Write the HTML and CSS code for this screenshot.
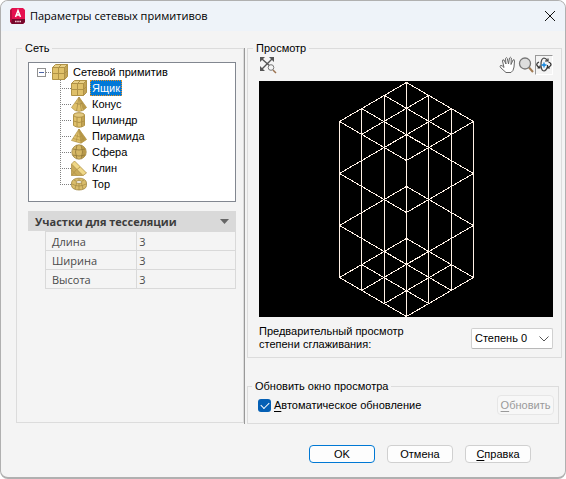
FILE: index.html
```html
<!DOCTYPE html>
<html lang="ru">
<head>
<meta charset="utf-8">
<meta name="viewport" content="width=device-width, initial-scale=1">
<title>Параметры сетевых примитивов</title>
<link rel="stylesheet" href="styles.css">
</head>
<body>
<div class="dialog" role="dialog" aria-labelledby="dialog-title">
  <header class="titlebar">
    <svg class="app-icon" viewBox="0 0 16 16" aria-hidden="true">
      <path fill="#e51050" d="M2 0h11l2 2v12l-2 2H2z"/>
      <path fill="#b80d40" d="M0 2l2-2v16l-2-2z"/>
      <path fill="#76082c" d="M2 11h13v3l-2 2H2l-1-1z"/>
      <path fill="none" stroke="#fff" stroke-width="1.5" d="M5.5 9L8 2.5 10.500 9M6.500 7h3"/>
      <path stroke="#f2c7d3" stroke-width="1.500" stroke-dasharray="1.600 .6" d="M5 13.500h6.500"/>
    </svg>
    <h1 id="dialog-title">Параметры сетевых примитивов</h1>
    <button class="close" type="button" aria-label="Закрыть">
      <svg viewBox="0 0 10 10" aria-hidden="true"><path d="M0 0l10 10M10 0L0 10"/></svg>
    </button>
  </header>

  <main class="content">
    <fieldset class="group mesh">
      <legend>Сеть</legend>
      <ul class="tree" role="tree">
        <li role="treeitem" aria-expanded="true">
          <div class="node root">
            <button class="expander" type="button" aria-label="Свернуть"></button>
            <svg class="shape" viewBox="0 0 16 16" aria-hidden="true">
              <path fill="#dfc069" stroke="#b09246" d="M.5 3.500h12v12H.5z"/>
              <path fill="#e8cf85" stroke="#b09246" d="M.5 3.500l3-3h12l-3 3z"/>
              <path fill="#c2a354" stroke="#b09246" d="M12.500 3.500l3-3v12l-3 3z"/>
              <path fill="none" stroke="#b09246" d="M.5 9.500h12l3-3M6.500 15.500v-12l3-3"/>
            </svg>
            <span class="name">Сетевой примитив</span>
          </div>
          <ul role="group">
            <li class="node" role="treeitem" aria-selected="true">
              <svg class="shape" viewBox="0 0 16 16" aria-hidden="true">
                <path fill="#dfc069" stroke="#b09246" d="M.5 3.500h12v12H.5z"/>
                <path fill="#e8cf85" stroke="#b09246" d="M.5 3.500l3-3h12l-3 3z"/>
                <path fill="#c2a354" stroke="#b09246" d="M12.500 3.500l3-3v12l-3 3z"/>
                <path fill="none" stroke="#b09246" d="M.5 9.500h12l3-3M6.500 15.500v-12l3-3"/>
              </svg>
              <span class="name selected">Ящик</span>
            </li>
            <li class="node" role="treeitem">
              <svg class="shape" viewBox="0 0 16 16" aria-hidden="true">
                <path fill="#dfc069" stroke="#b09246" stroke-width=".7" d="M8 1L.5 11.500 4 14.500l4 .9 4-.9 3.500-3z"/>
                <path fill="#b99a4b" d="M8 1l7.500 10.500-3.500 3z"/>
                <path fill="none" stroke="#a08643" stroke-width=".7" d="M8 1L5.500 15M8 1l2.500 14M4.200 7q3.800 2.500 7.600 0"/>
              </svg>
              <span class="name">Конус</span>
            </li>
            <li class="node" role="treeitem">
              <svg class="shape" viewBox="0 0 16 16" aria-hidden="true">
                <path fill="#dfc069" stroke="#b09246" d="M2.500 3v10.500q5.500 3.500 11 0V3"/>
                <path fill="#c2a354" d="M10.500 4h2.500v9.500l-2.500 1z"/>
                <ellipse cx="8" cy="3" rx="5.500" ry="2.300" fill="#e2c87e" stroke="#b09246"/>
                <path fill="none" stroke="#b09246" d="M6 5v10M10.500 5v10M2.500 9q5.500 3 11 0"/>
              </svg>
              <span class="name">Цилиндр</span>
            </li>
            <li class="node" role="treeitem">
              <svg class="shape" viewBox="0 0 16 16" aria-hidden="true">
                <path fill="#dfc069" stroke="#b09246" stroke-width=".7" d="M8 1L.5 12.500l9.500 2.700 5.500-3.700z"/>
                <path fill="#b99a4b" d="M8 1l7.500 10.500L10 15.200z"/>
                <path fill="none" stroke="#b09246" stroke-width=".7" d="M8 1l2 14M8 1L5 14M8 1l5 12M4 7.500l5 1.500 3-2M2 10.500l8 2 4-3"/>
              </svg>
              <span class="name">Пирамида</span>
            </li>
            <li class="node" role="treeitem">
              <svg class="shape" viewBox="0 0 16 16" aria-hidden="true">
                <circle cx="8" cy="8" r="7.200" fill="#d5b765" stroke="#a08643" stroke-width=".8"/>
                <path fill="#b99a4b" d="M10.500 1.500a7 7 0 0 1 0 13q2-6 0-13z"/>
                <path fill="none" stroke="#92793a" stroke-width=".8" d="M6 1q-3 7 0 14M10 1q3 7 0 14M1.500 5q6.500 2 13 0M1.500 11q6.500 2 13 0"/>
              </svg>
              <span class="name">Сфера</span>
            </li>
            <li class="node" role="treeitem">
              <svg class="shape" viewBox="0 0 16 16" aria-hidden="true">
                <path fill="#c9aa58" stroke="#b09246" stroke-width=".8" d="M.5 4v11.500H12z"/>
                <path fill="#f0d888" stroke="#b09246" stroke-width=".8" d="M.5 4l3-3L15.500 13 12 15.500z"/>
                <path fill="none" stroke="#b09246" stroke-width=".8" d="M.5 15.500l5-6M.5 10l5.500 5.500M6 9.500L9 7"/>
              </svg>
              <span class="name">Клин</span>
            </li>
            <li class="node" role="treeitem">
              <svg class="shape" viewBox="0 0 16 16" aria-hidden="true">
                <path fill="#d9bc6a" stroke="#a08643" stroke-width=".8" d="M.5 7C.5.5 15.500.5 15.500 7v2.500c0 6-15 6-15 0z"/>
                <ellipse cx="8" cy="6" rx="3" ry="1.300" fill="#fff" stroke="#a08643" stroke-width=".8"/>
                <path fill="none" stroke="#a08643" stroke-width=".7" d="M1 8q7 4 14 0M5.500 7L4 13M10.500 7l1.500 6M8 7.500V14M5 5L3 4M11 5l2-1M8 4.500v-2"/>
              </svg>
              <span class="name">Тор</span>
            </li>
          </ul>
        </li>
      </ul>

      <section class="tessellation">
        <h2><button class="section-toggle" type="button" aria-expanded="true">Участки для тесселяции
          <svg viewBox="0 0 9 5" aria-hidden="true"><path d="M0 0h9L4.500 5z"/></svg></button></h2>
        <table class="properties">
          <tr><th scope="row"><label for="length">Длина</label></th><td><input id="length" type="text" value="3"></td></tr>
          <tr><th scope="row"><label for="width">Ширина</label></th><td><input id="width" type="text" value="3"></td></tr>
          <tr><th scope="row"><label for="height">Высота</label></th><td><input id="height" type="text" value="3"></td></tr>
        </table>
      </section>
    </fieldset>

    <div class="splitter" role="separator" aria-orientation="vertical"></div>

    <div class="side">
      <fieldset class="group preview">
        <legend>Просмотр</legend>
        <div class="toolbar">
          <button class="tool" type="button" aria-label="Показать в границах">
            <svg viewBox="0 0 18 18" aria-hidden="true">
              <path fill="none" stroke="#555" stroke-width="1.400" d="M3 3l9 8M13 3L3 13"/>
              <path fill="#555" d="M1 1h5L1 6zM15 1v5l-5-5zM1 15v-5l5 5z"/>
              <circle cx="12" cy="11.500" r="2.800" fill="#f4f4f4" stroke="#777"/>
              <path stroke="#9c7350" stroke-width="1.500" d="M14 14l3 3"/>
            </svg>
          </button>
          <span class="spring"></span>
          <button class="tool" type="button" aria-label="Панорамирование">
            <svg viewBox="0 0 18 18" aria-hidden="true">
              <path fill="#fff" stroke="#666" stroke-linejoin="round" d="M7 16.500L2 12Q.5 10.500 1.500 9.500q1.500-.5 3.500 2L3.500 5q0-1.800 1.500-1L7 8 6.500 2.500q.8-1.800 1.800 0L9.500 8l1-6q1-1.500 1.800 0L12 8.500l2-4.500q1.500-1 1.500.8L15 11q-.5 4-3 5.500z"/>
            </svg>
          </button>
          <button class="tool" type="button" aria-label="Зумирование">
            <svg viewBox="0 0 18 18" aria-hidden="true">
              <path stroke="#a17a52" stroke-width="2" d="M12 11.500l4 4.500"/>
              <circle cx="8" cy="7.500" r="5.500" fill="#ddd" stroke="#777" stroke-width="1.300"/>
            </svg>
          </button>
          <button class="tool active" type="button" aria-label="Орбита" aria-pressed="true">
            <svg viewBox="0 0 16 16" aria-hidden="true">
              <path fill="none" stroke="#444" stroke-width="1.200" d="M11.500 4Q10 1 8 1 5 1.500 5 7.500t3 6.500q2 0 3.500-4"/>
              <path fill="none" stroke="#333" stroke-width="1.200" d="M3 5Q.7 6 .7 7.500T4 11M1.500 11H4V8.500M9 4h3V1.500M12.500 5q2.800 1 2.500 3-.5 1.500-3.500 2.500M11.500 8v3H14"/>
              <path stroke="#0b83dd" stroke-width="1.300" d="M8 5.500v5M5.500 8h5"/>
            </svg>
          </button>
        </div>
        <svg class="viewport" viewBox="0 0 294 236" role="img" aria-label="Каркас ящика">
          <path d="M80.500 40.500v156M102.500 27.500v182M125.500 14.500v208M147.500 1.500v234M169.500 14.500v208M192.500 27.500v182M214.500 40.500v156"/>
          <path d="M80.500 40.500l67-39 67 39-67 39zM102.500 27.500l67 39M125.500 14.500l67 39M192.500 27.500l-67 39M169.500 14.500l-67 39"/>
          <path d="M80.500 92.500l67-39 67 39-67 39zM80.500 144.500l67-39 67 39-67 39z"/>
          <path d="M80.500 196.500l67-39 67 39-67 39zM102.500 183.500l67 39M125.500 170.500l67 39M192.500 183.500l-67 39M169.500 170.500l-67 39"/>
        </svg>
        <div class="smoothness">
          <label for="level">Предварительный просмотр степени сглаживания:</label>
          <span class="select">
            <select id="level"><option>Степень 0</option><option>Степень 1</option><option>Степень 2</option></select>
            <svg viewBox="0 0 10 6" aria-hidden="true"><path d="M.5.5L5 5 9.500.5"/></svg>
          </span>
        </div>
      </fieldset>

      <fieldset class="group update">
        <legend>Обновить окно просмотра</legend>
        <input id="auto" type="checkbox" checked>
        <label for="auto"><u>А</u>втоматическое обновление</label>
        <button class="button" type="button" disabled><u>О</u>бновить</button>
      </fieldset>
    </div>
  </main>

  <footer class="actions">
    <button class="button default" type="button">OK</button>
    <button class="button" type="button">Отмена</button>
    <button class="button" type="button"><u>С</u>правка</button>
  </footer>
</div>
</body>
</html>
```
FILE: styles.css
```css
* { box-sizing: border-box; }

body {
  margin: 0;
  background: #fff;
  color: #000;
  font: 11px/13px "Liberation Sans", sans-serif;
}

button, input, select { font: inherit; color: inherit; margin: 0; }
h1, h2, ul { margin: 0; padding: 0; list-style: none; }
u { text-underline-offset: 2px; }

.dialog {
  display: flex;
  flex-direction: column;
  min-height: 100vh;
  overflow: hidden;
  border: 1px solid #b0b0b0;
  border-bottom-width: 2px;
  border-radius: 8px;
  background: #f4f4f4;
}

.titlebar {
  display: flex;
  align-items: center;
  height: 30px;
  padding: 0 10px 0 9px;
  background: #eef3f9;
}
.app-icon { width: 16px; height: 16px; margin-right: 4px; }
.titlebar h1 { flex: 1; font: 11px/16px "Open Sans", sans-serif; }
.close { padding: 0; border: 0; background: none; line-height: 0; }
.close svg { width: 10px; height: 10px; overflow: visible; fill: none; stroke: #111; stroke-width: 1; }

.content {
  display: grid;
  grid-template-columns: 228fr 3px 315fr;
  padding: 10px 3px 0 15px;
}

.group {
  min-width: 0;
  margin: 0;
  padding: 0;
  border: 1px solid #dcdcdc;
}
.group legend { height: 14px; margin-left: -6px; padding: 0 3px; line-height: 14px; }

.mesh { margin-bottom: 1px; padding: 7px 7px 0 11px; }

.splitter { margin-top: 7px; border-left: 1px solid #999; }

.tree {
  height: 140px;
  padding: 1px 0 0 8px;
  border: 1px solid #828790;
  background: #fff;
}
.tree ul {
  margin-left: 23px;
  background: repeating-linear-gradient(#808080 0 1px, transparent 1px 2px) 0 0 / 1px 105px no-repeat;
}
.node { display: flex; align-items: center; height: 16px; }
.node::before {
  content: "";
  width: 11px;
  height: 1px;
  background: repeating-linear-gradient(90deg, #808080 0 1px, transparent 1px 2px);
}
.root::before { order: 1; width: 6px; }
.root .shape, .root .name { order: 2; }
.shape { width: 16px; height: 16px; }
.name { margin-left: 3px; padding: 0 2px; line-height: 16px; }
.selected { outline: 1px dotted #e89020; outline-offset: -1px; background: #0078d7; color: #fff; }
.expander {
  width: 9px;
  height: 9px;
  padding: 0;
  border: 1px solid #919191;
  background: linear-gradient(#4b63a7, #4b63a7) center / 5px 1px no-repeat, #fff;
}

.tessellation { margin-top: 9px; font-family: "Open Sans", sans-serif; color: #4a4a4a; }
.tessellation h2 { font: inherit; }
.section-toggle {
  display: flex;
  justify-content: space-between;
  align-items: center;
  width: 100%;
  height: 20px;
  padding: 0 7px;
  border: 0;
  background: #d9d9d9;
  color: #3c3c3c;
  font-weight: 700;
}
.section-toggle svg { width: 9px; height: 5px; fill: #666; }
.properties { width: calc(100% - 17px); margin-left: 17px; border-collapse: collapse; table-layout: fixed; }
.properties th, .properties td { height: 19px; padding: 0 0 0 6px; border: 1px solid #d9d9d9; text-align: left; font-weight: 400; }
.properties th { width: 48%; }
.properties td { padding-left: 2px; }
.properties input { display: block; width: 100%; height: 16px; padding: 0; border: 0; background: none; }

.preview { padding: 0 8px 6px 11px; }
.toolbar { display: flex; height: 26px; }
.spring { flex: 1; }
.tool { width: 18px; height: 20px; padding: 0; border: 0; background: none; line-height: 0; }
.tool svg { width: 18px; height: 18px; }
.tool.active { border: 1px solid; border-color: #999 #fff #fff #999; }
.tool.active svg { width: 16px; height: 16px; }
.viewport {
  display: block;
  width: 100%;
  background: #000;
  fill: none;
  stroke: #fff1e6;
  shape-rendering: crispEdges;
}
.smoothness { display: flex; align-items: center; justify-content: space-between; margin-top: 8px; }
.smoothness label { width: 160px; }
.select { position: relative; }
.select select {
  appearance: none;
  width: 82px;
  height: 21px;
  padding: 0 3px;
  border: 1px solid #d0d0d0;
  border-bottom-color: #b8b8b8;
  border-radius: 2px;
  background: #fff;
}
.select svg { position: absolute; right: 4px; top: 8px; width: 10px; height: 6px; fill: none; stroke: #555; pointer-events: none; }

.side { display: flex; flex-direction: column; gap: 21px; }
.update { display: flex; align-items: center; margin-right: 3px; padding: 2px 4px 8px 10px; }
.update label { flex: 1; }
.update input {
  appearance: none;
  display: grid;
  place-items: center;
  width: 13px;
  height: 13px;
  margin-right: 3px;
  border-radius: 3px;
  background: #0560b5;
}
.update input:checked::after {
  content: "";
  width: 7px;
  height: 4px;
  margin-top: -2px;
  border: solid #fff;
  border-width: 0 0 1px 1px;
  transform: rotate(-45deg);
}

.button {
  min-width: 66px;
  height: 18px;
  padding: 0 2px;
  border: 1px solid #d0d0d0;
  border-radius: 4px;
  background: #fdfdfd;
}
.button.default { border-color: #0078d4; }
.button:disabled { min-width: 57px; height: 20px; border-color: #e6e6e6; background: #f7f7f7; color: #9a9a9a; }
.actions { display: flex; justify-content: flex-end; gap: 12px; padding: 21px 34px 14px; }
```
